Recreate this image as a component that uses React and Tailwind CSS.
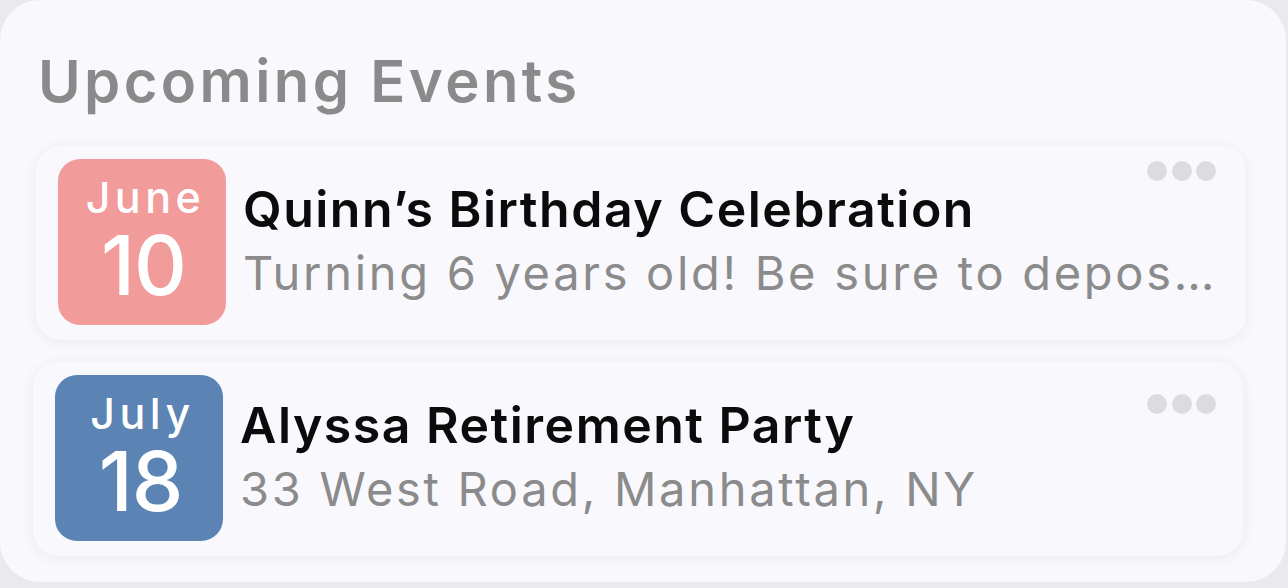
const events = [
  {
    month: 'June',
    day: '10',
    color: 'bg-[#f29b9b]',
    title: 'Quinn’s Birthday Celebration',
    detail: 'Turning 6 years old! Be sure to deposit your gifts at the front desk',
    shift: 'ml-[36px]',
    dots: 'top-[15px] right-[30px]',
  },
  {
    month: 'July',
    day: '18',
    color: 'bg-[#5b84b5]',
    title: 'Alyssa Retirement Party',
    detail: '33 West Road, Manhattan, NY',
    shift: 'ml-[33px]',
    dots: 'top-[32px] right-[27px]',
  },
]

const Dots = ({ pos }) => (
  <div className={`absolute ${pos} flex gap-[4.5px]`}>
    <span className="w-[20px] h-[20px] rounded-full bg-[#dcdce0]" />
    <span className="w-[20px] h-[20px] rounded-full bg-[#dcdce0]" />
    <span className="w-[20px] h-[20px] rounded-full bg-[#dcdce0]" />
  </div>
)

const EventCard = ({ event }) => (
  <div
    className={`relative ${event.shift} w-[1210px] h-[194px] rounded-[26px] bg-[#f8f8fd] shadow-[0_2px_14px_rgba(40,40,70,0.07)] flex items-start pt-[13px] pl-[22px] pr-[22px]`}
  >
    <div
      className={`${event.color} w-[168px] h-[166px] shrink-0 rounded-[22px] flex flex-col items-center pt-[14px] text-white`}
    >
      <span className="text-[43px] leading-[48px] font-medium tracking-[4.5px] pl-[7px]">
        {event.month}
      </span>
      <span className="mt-[10px] text-[82px] leading-[70px] font-medium tracking-[-1px] pl-[3px]">
        {event.day}
      </span>
    </div>
    <div className="ml-[17px] mt-[18px] min-w-0 flex flex-col">
      <div className="text-[50px] leading-[64px] font-semibold tracking-[1.5px] text-[#0b0b0b] truncate">
        {event.title}
      </div>
      <div className="text-[47px] leading-[64px] tracking-[2.7px] text-[#8b8b8b] truncate">
        {event.detail}
      </div>
    </div>
    <Dots pos={event.dots} />
  </div>
)

export default function App() {
  return (
    <div
      className="w-[1288px] h-[588px] bg-[#e9e9ee] overflow-hidden"
      style={{ fontFamily: 'Inter, "Noto Sans", sans-serif' }}
    >
      <div className="w-[1286px] h-[582px] rounded-[40px] bg-[#f8f8fd] pt-[45px]">
        <h2 className="ml-[38px] text-[58px] leading-[72px] font-semibold tracking-[3.4px] text-[#8a8a8a]">
          Upcoming Events
        </h2>
        <div className="mt-[29px] flex flex-col gap-[22px]">
          {events.map((e) => (
            <EventCard key={e.title} event={e} />
          ))}
        </div>
      </div>
    </div>
  )
}
